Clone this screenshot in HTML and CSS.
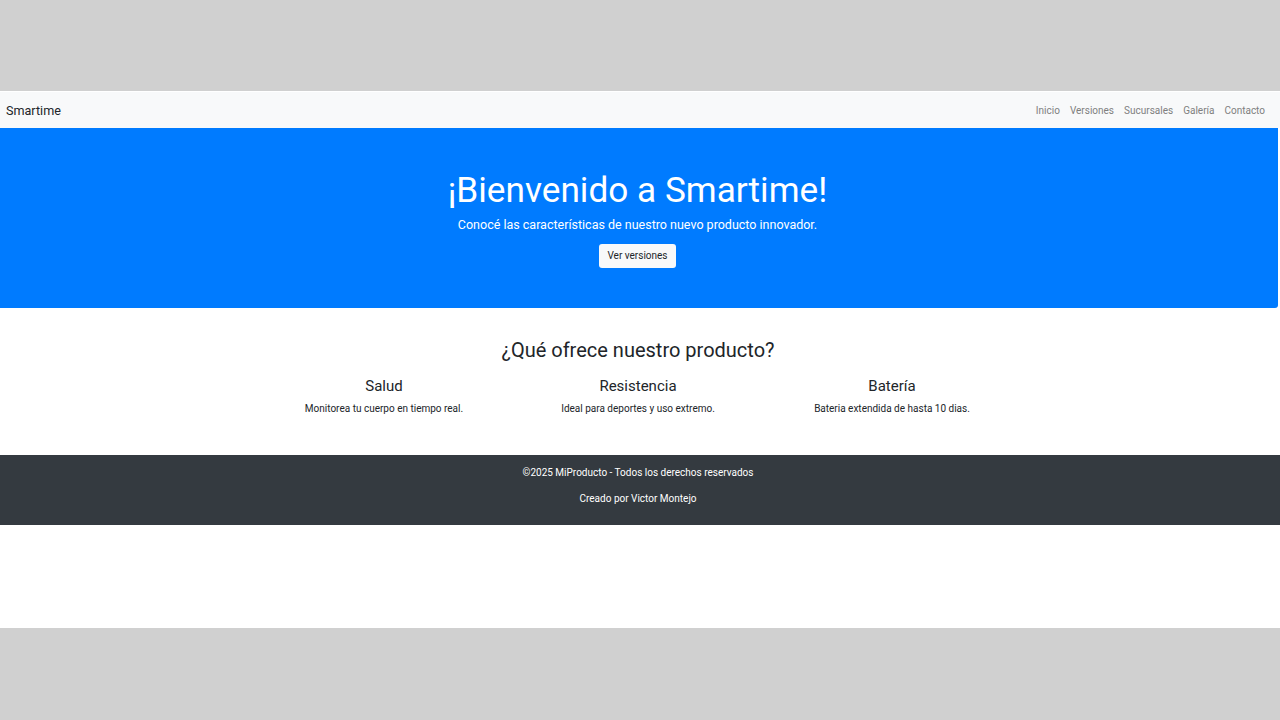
FILE: index.html
```html
<!DOCTYPE html>
<html lang="es">
<head>
<meta charset="utf-8">
<title>Smartime</title>
<link rel="stylesheet" href="styles.css">
</head>
<body>
<div class="frame">
  <nav class="navbar">
    <span class="brand">Smartime</span>
    <ul class="nav-links">
      <li>Inicio</li>
      <li>Versiones</li>
      <li>Sucursales</li>
      <li>Galería</li>
      <li>Contacto</li>
    </ul>
  </nav>
  <header class="hero">
    <h1 class="hero-title">¡Bienvenido a Smartime!</h1>
    <p class="hero-sub">Conocé las características de nuestro nuevo producto innovador.</p>
    <a class="btn-light">Ver versiones</a>
  </header>
  <section class="features">
    <h2 class="features-title">¿Qué ofrece nuestro producto?</h2>
    <div class="feature-row">
      <div class="feature">
        <h3>Salud</h3>
        <p>Monitorea tu cuerpo en tiempo real.</p>
      </div>
      <div class="feature">
        <h3>Resistencia</h3>
        <p>Ideal para deportes y uso extremo.</p>
      </div>
      <div class="feature">
        <h3>Batería</h3>
        <p>Bateria extendida de hasta 10 dias.</p>
      </div>
    </div>
  </section>
  <footer class="footer">
    <p>©2025 MiProducto - Todos los derechos reservados</p>
    <p>Creado por Victor Montejo</p>
  </footer>
</div>
</body>
</html>
```
FILE: styles.css
```css
html, body {
  margin: 0;
  padding: 0;
  background: #d0d0d0;
  font-family: Roboto, "Liberation Sans", Arial, sans-serif;
  color: #212529;
}
.frame {
  margin-top: 91px;
  height: 537px;
  background: #ffffff;
  border-top: 1px solid #ffffff;
  box-sizing: border-box;
  width: 1280px;
}
.navbar {
  height: 36px;
  background: #f8f9fa;
  display: flex;
  align-items: center;
  justify-content: space-between;
  padding: 0 6px;
}
.brand {
  font-size: 12.6px;
  color: #212529;
}
.nav-links {
  list-style: none;
  margin: 0;
  padding: 0 9px 0 0;
  display: flex;
  gap: 10px;
}
.nav-links li {
  font-size: 10px;
  color: #7f7f7f;
}
.hero {
  background: #007bff;
  color: #fff;
  height: 180px;
  width: 1278px;
  padding-right: 3px;
  border-radius: 0 0 3px 0;
  display: flex;
  flex-direction: column;
  align-items: center;
  box-sizing: border-box;
  padding-top: 41px;
}
.hero-title {
  margin: 0;
  font-size: 35.2px;
  font-weight: 400;
  line-height: 42px;
}
.hero-sub {
  margin: 6px 0 0;
  font-size: 12.5px;
  line-height: 16px;
}
.btn-light {
  margin-top: 11px;
  background: #f8f9fa;
  color: #212529;
  font-size: 10px;
  padding: 0 8px;
  height: 24px;
  line-height: 24px;
  border-radius: 3px;
}
.features {
  width: 1276px;
  height: 147px;
  display: flex;
  flex-direction: column;
  align-items: center;
  box-sizing: border-box;
  padding-top: 29px;
}
.features-title {
  margin: 0;
  font-size: 20px;
  font-weight: 400;
  line-height: 26px;
}
.feature-row {
  display: flex;
  width: 762px;
  margin-top: 14px;
}
.feature {
  flex: 1;
  text-align: center;
}
.feature h3 {
  margin: 0;
  font-size: 15px;
  font-weight: 400;
  line-height: 18px;
}
.feature p {
  margin: 8px 0 0;
  font-size: 10px;
  line-height: 12px;
}
.footer {
  background: #343a40;
  color: #fff;
  height: 70px;
  width: 1280px;
  box-sizing: border-box;
  padding: 12px 4px 0 0;
  text-align: center;
}
.footer p {
  margin: 0 0 14px;
  font-size: 10px;
  line-height: 12px;
}
```
